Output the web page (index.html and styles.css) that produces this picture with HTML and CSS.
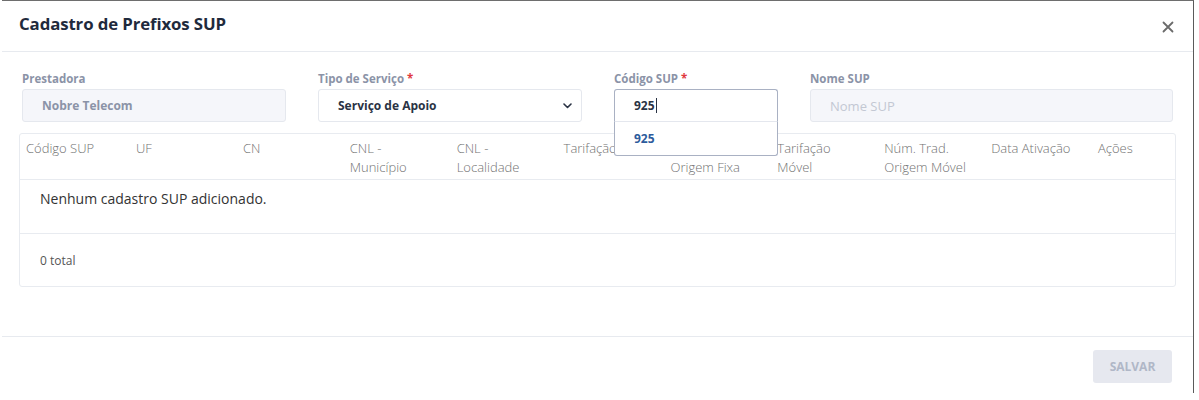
FILE: index.html
```html
<!DOCTYPE html>
<html lang="pt-BR">
<head>
<meta charset="utf-8">
<title>Cadastro de Prefixos SUP</title>
<link rel="stylesheet" href="styles.css">
</head>
<body>
<div class="modal">
  <div class="modal-header">
    <h1 class="modal-title">Cadastro de Prefixos SUP</h1>
    <button class="close-btn" aria-label="Fechar">
      <svg width="12" height="12" viewBox="0 0 12 12"><path d="M1.5 1.5 L10.5 10.5 M10.5 1.5 L1.5 10.5" stroke="#6b6b6b" stroke-width="1.8" stroke-linecap="round" fill="none"/></svg>
    </button>
  </div>
  <div class="modal-body">
    <div class="form-row">
      <div class="field">
        <label class="field-label">Prestadora</label>
        <div class="input input-disabled input-bold">Nobre Telecom</div>
      </div>
      <div class="field">
        <label class="field-label">Tipo de Serviço <span class="req">*</span></label>
        <div class="input input-select">
          <span>Serviço de Apoio</span>
          <svg class="chevron" width="9" height="6" viewBox="0 0 9 6"><path d="M1 1 L4.5 4.5 L8 1" stroke="#2a3344" stroke-width="1.6" fill="none" stroke-linecap="round" stroke-linejoin="round"/></svg>
        </div>
      </div>
      <div class="field">
        <label class="field-label">Código SUP <span class="req">*</span></label>
        <div class="autocomplete">
          <div class="input input-focus">925<span class="caret"></span></div>
          <div class="suggestions">
            <div class="suggestion">925</div>
          </div>
        </div>
      </div>
      <div class="field">
        <label class="field-label">Nome SUP</label>
        <div class="input input-disabled placeholder">Nome SUP</div>
      </div>
    </div>

    <div class="table">
      <div class="thead">
        <div class="th">Código SUP</div>
        <div class="th">UF</div>
        <div class="th">CN</div>
        <div class="th">CNL -<br>Município</div>
        <div class="th">CNL -<br>Localidade</div>
        <div class="th">Tarifação Fixa</div>
        <div class="th">Núm. Trad.<br>Origem Fixa</div>
        <div class="th">Tarifação<br>Móvel</div>
        <div class="th">Núm. Trad.<br>Origem Móvel</div>
        <div class="th">Data Ativação</div>
        <div class="th">Ações</div>
      </div>
      <div class="empty-row">Nenhum cadastro SUP adicionado.</div>
      <div class="table-footer">0 total</div>
    </div>
  </div>
  <div class="modal-footer">
    <button class="btn-save" disabled>SALVAR</button>
  </div>
</div>
</body>
</html>
```

FILE: styles.css
```css
* { box-sizing: border-box; }
html, body { margin: 0; padding: 0; background: #ffffff; }
body { font-family: "Open Sans", "Noto Sans", sans-serif; }

.modal {
  margin-left: 2px;
  width: 1192px;
  height: 393px;
  background: #fff;
  border-top: 1px solid #6e6e6e;
  border-right: 1px solid #5a5a5a;
  display: flex;
  flex-direction: column;
}

.modal-header {
  height: 51px;
  border-bottom: 1px solid #e7eaef;
  display: flex;
  align-items: center;
  justify-content: space-between;
  padding: 0 19px 0 17px;
}
.modal-title {
  margin: 0;
  margin-top: -6px;
  font-family: "Open Sans", sans-serif;
  font-weight: 700;
  font-size: 16.8px;
  color: #1f2a3c;
  letter-spacing: -0.1px;
}
.close-btn {
  border: 0;
  background: none;
  padding: 0;
  display: flex;
  margin-top: 2px;
  cursor: pointer;
}

.modal-body {
  padding: 19px 17px 0 17px;
  flex: 1;
}

.form-row {
  display: grid;
  grid-template-columns: 264px 264px 164px 1fr;
  column-gap: 32px;
  padding: 0 3px;
}
.field { display: flex; flex-direction: column; }
.field-label {
  font-size: 11.5px;
  font-weight: 700;
  color: #8b93a7;
  line-height: 16px;
  margin-bottom: 2px;
}
.req { color: #e0393e; }

.input {
  height: 33px;
  border: 1px solid #e5e8ee;
  border-radius: 3px;
  background: #fff;
  display: flex;
  align-items: center;
  padding: 0 19px;
  font-size: 12px;
  font-weight: 700;
  color: #2a3344;
}
.input-disabled { background: #f5f6fa; }
.input-bold { color: #8b93a7; }
.placeholder { font-weight: 400; color: #c3c8d3; font-size: 13px; }
.input-select { justify-content: space-between; padding-right: 9px; }
.chevron { margin-top: 1px; }

.autocomplete { position: relative; }
.input-focus {
  border-color: #a9b1c3;
  border-bottom-color: #e4e7ee;
  border-radius: 3px 3px 0 0;
}
.caret {
  display: inline-block;
  width: 1px;
  height: 15px;
  background: #2a3344;
  margin-left: 1px;
}
.suggestions {
  position: absolute;
  top: 100%;
  left: 0;
  right: 0;
  background: #fff;
  border: 1px solid #a9b1c3;
  border-top: 0;
  border-radius: 0 0 3px 3px;
  z-index: 5;
}
.suggestion {
  height: 33px;
  display: flex;
  align-items: center;
  padding: 0 19px;
  font-size: 12px;
  font-weight: 700;
  color: #2d5b9c;
}

.table {
  margin-top: 11px;
  border: 1px solid #e8ebf0;
  border-radius: 3px;
}
.thead {
  display: grid;
  grid-template-columns: 110px repeat(9, 106.9px) 1fr;
  padding: 5px 0 2px 6px;
  border-bottom: 1px solid #e8ebf0;
}
.th {
  font-size: 13px;
  font-weight: 300;
  line-height: 19px;
  color: #727272;
  white-space: nowrap;
}
.empty-row {
  height: 54px;
  padding: 9px 0 0 20px;
  font-size: 14px;
  line-height: 20px;
  color: #333;
  border-bottom: 1px solid #e8ebf0;
}
.table-footer {
  height: 52px;
  display: flex;
  align-items: center;
  padding: 1px 0 0 20px;
  font-size: 12px;
  color: #555;
}

.modal-footer {
  height: 57px;
  border-top: 1px solid #e7eaef;
  display: flex;
  justify-content: flex-end;
  align-items: flex-start;
  padding: 13px 21px 0 0;
}
.btn-save {
  width: 79px;
  height: 33px;
  border: 0;
  border-radius: 3px;
  background: #e6e8ef;
  color: #b0b7c7;
  font-family: "Open Sans", sans-serif;
  font-weight: 700;
  font-size: 12px;
}
```
